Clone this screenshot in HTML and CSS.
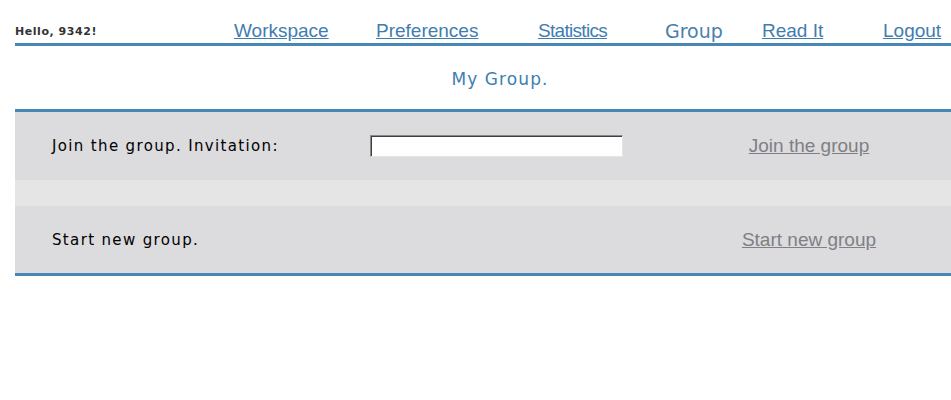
FILE: index.html
```html
<!DOCTYPE html>
<html>
<head>
<meta charset="utf-8">
<title>My Group</title>
<link rel="stylesheet" href="styles.css">
</head>
<body>
<div class="page">
  <div class="topbar">
    <span class="hello">Hello, 9342!</span>
    <a class="nav" href="#">Workspace</a>
    <a class="nav" href="#">Preferences</a>
    <a class="nav narrow" href="#">Statistics</a>
    <span class="nav current">Group</span>
    <a class="nav" href="#">Read It</a>
    <a class="nav" href="#">Logout</a>
  </div>
  <div class="title">My Group.</div>
  <div class="panel">
    <div class="row">
      <span class="label">Join the group. Invitation:</span>
      <span class="field"><input class="invite" type="text"></span>
      <span class="action"><a href="#">Join the group</a></span>
    </div>
    <div class="spacer"></div>
    <div class="row">
      <span class="label">Start new group.</span>
      <span class="field"></span>
      <span class="action"><a href="#">Start new group</a></span>
    </div>
  </div>
</div>
</body>
</html>
```
FILE: styles.css
```css
html { overflow: hidden; }
body {
  margin: 0;
  background: #fff;
  font-family: "DejaVu Sans", Verdana, sans-serif;
}
.page {
  margin-left: 15px;
  width: 970px;
}
.topbar {
  display: grid;
  grid-template-columns: 219px 142px 162px 127px 97px 121px 1fr;
  align-items: end;
  padding-top: 21px;
  padding-bottom: 2px;
  border-bottom: 3px solid #4886b5;
  line-height: 20px;
}
.hello {
  font-size: 11px;
  line-height: 11px;
  padding-bottom: 4px;
  font-weight: bold;
  color: #333;
  letter-spacing: 0.55px;
}
.nav {
  font-family: "Liberation Sans", Arial, sans-serif;
  font-size: 19px;
  color: #3f7db0;
  text-decoration: underline;
  white-space: nowrap;
}
.nav.narrow { letter-spacing: -0.7px; }
.nav.current {
  font-family: "DejaVu Sans", Verdana, sans-serif;
  color: #4a7fad;
  text-decoration: none;
}
.title {
  box-sizing: border-box;
  height: 63px;
  padding-top: 2px;
  display: flex;
  align-items: center;
  justify-content: center;
  font-size: 17px;
  letter-spacing: 1.1px;
  color: #3d80b2;
}
.panel {
  border-top: 3px solid #4886b5;
  border-bottom: 3px solid #4886b5;
  background: #dcdbde;
}
.row {
  display: grid;
  grid-template-columns: 355px 263px 1fr;
  align-items: center;
  height: 68px;
}
.row + .spacer + .row { height: 67px; }
.label {
  padding-left: 37px;
  font-size: 15px;
  letter-spacing: 1.35px;
  color: #000;
}
.field { display: flex; }
.invite {
  box-sizing: border-box;
  width: 253px;
  height: 22px;
  margin: 0;
  padding: 0 2px;
  background: #fff;
  border: 1px solid;
  border-color: #8a8a8a #e4e4e4 #e4e4e4 #8a8a8a;
  box-shadow: inset 1px 1px 0 #404040;
  outline: none;
}
.action {
  text-align: center;
}
.action a {
  font-family: "Liberation Sans", Arial, sans-serif;
  font-size: 19px;
  color: #7f7f85;
  text-decoration: underline;
}
.spacer {
  height: 26px;
  background: #e5e5e5;
}
```
